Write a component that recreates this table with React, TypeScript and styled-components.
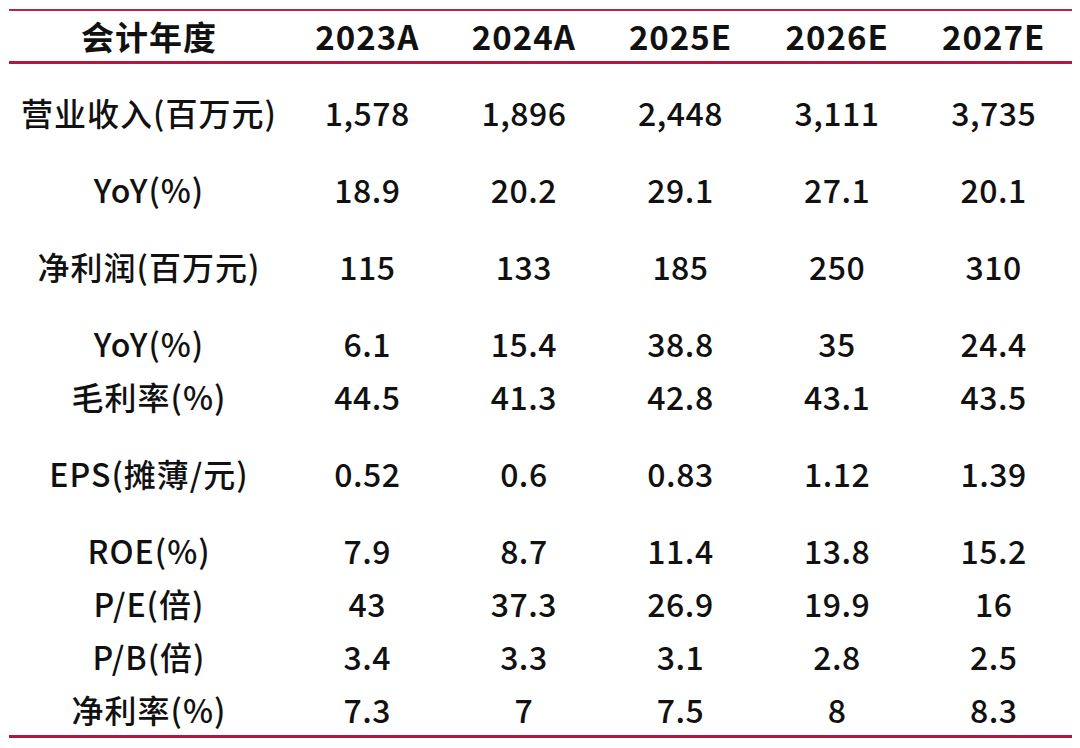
import React from "react";
import styled, { createGlobalStyle } from "styled-components";

const GlobalStyle = createGlobalStyle`
  html, body {
    margin: 0;
    padding: 0;
    background: #ffffff;
  }
  body {
    font-family: "Noto Sans CJK SC", "Noto Sans", sans-serif;
    color: #111111;
  }
`;

const Page = styled.div`
  width: 1080px;
  height: 748px;
  padding: 9px 8px 0 9px;
  box-sizing: border-box;
  background: #ffffff;
`;

const Table = styled.div`
  width: 1063px;
  display: flex;
  flex-direction: column;
  border-top: 2px solid #b8234a;
  border-bottom: 3px solid #b01840;
`;

const HeaderRow = styled.div`
  display: grid;
  grid-template-columns: 280px repeat(5, 1fr);
  height: 50px;
  align-items: center;
  border-bottom: 3px solid #b01840;
`;

const Body = styled.div`
  display: flex;
  flex-direction: column;
  padding-top: 21px;
`;

const Row = styled.div<{ $spaced?: boolean }>`
  display: grid;
  grid-template-columns: 280px repeat(5, 1fr);
  height: 53px;
  align-items: center;
  margin-top: ${(p) => (p.$spaced ? "24px" : "0")};

  &:first-child {
    margin-top: 0;
  }
`;

const HeadCell = styled.div`
  text-align: center;
  font-size: 33px;
  font-weight: 700;
  line-height: 1;
  letter-spacing: 1px;
  color: #111111;
`;

const Cell = styled.div<{ $label?: boolean }>`
  text-align: center;
  font-size: 32px;
  font-weight: 500;
  line-height: 1;
  letter-spacing: ${(p) => (p.$label ? "1px" : "0.5px")};
  color: #111111;
`;

const years = ["2023A", "2024A", "2025E", "2026E", "2027E"];

const rows: { label: string; values: string[]; spaced: boolean }[] = [
  { label: "营业收入(百万元)", values: ["1,578", "1,896", "2,448", "3,111", "3,735"], spaced: true },
  { label: "YoY(%)", values: ["18.9", "20.2", "29.1", "27.1", "20.1"], spaced: true },
  { label: "净利润(百万元)", values: ["115", "133", "185", "250", "310"], spaced: true },
  { label: "YoY(%)", values: ["6.1", "15.4", "38.8", "35", "24.4"], spaced: true },
  { label: "毛利率(%)", values: ["44.5", "41.3", "42.8", "43.1", "43.5"], spaced: false },
  { label: "EPS(摊薄/元)", values: ["0.52", "0.6", "0.83", "1.12", "1.39"], spaced: true },
  { label: "ROE(%)", values: ["7.9", "8.7", "11.4", "13.8", "15.2"], spaced: true },
  { label: "P/E(倍)", values: ["43", "37.3", "26.9", "19.9", "16"], spaced: false },
  { label: "P/B(倍)", values: ["3.4", "3.3", "3.1", "2.8", "2.5"], spaced: false },
  { label: "净利率(%)", values: ["7.3", "7", "7.5", "8", "8.3"], spaced: false },
];

const App = () => {
  return (
    <React.Fragment>
      <GlobalStyle />
      <Page>
        <Table>
          <HeaderRow>
            <HeadCell>会计年度</HeadCell>
            {years.map((y) => (
              <HeadCell key={y}>{y}</HeadCell>
            ))}
          </HeaderRow>
          <Body>
            {rows.map((r, i) => (
              <Row key={i} $spaced={r.spaced}>
                <Cell $label>{r.label}</Cell>
                {r.values.map((v, j) => (
                  <Cell key={j}>{v}</Cell>
                ))}
              </Row>
            ))}
          </Body>
        </Table>
      </Page>
    </React.Fragment>
  );
};

export default App;
